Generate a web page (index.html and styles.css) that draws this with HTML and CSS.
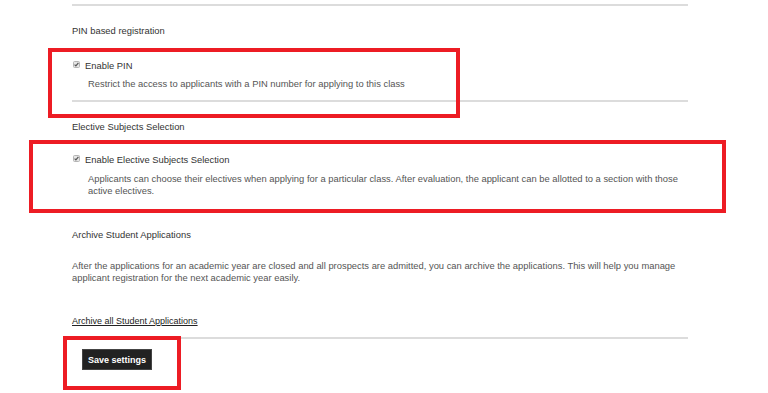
FILE: index.html
```html
<!DOCTYPE html>
<html>
<head>
<meta charset="utf-8">
<link rel="stylesheet" href="styles.css">
</head>
<body>
<div class="page">
  <div class="settings">
    <hr class="rule rule-top">
    <h3 class="heading h-pin">PIN based registration</h3>
    <div class="option opt-pin">
      <label class="check-row">
        <span class="check"><svg width="7" height="7" viewBox="0 0 7 7"><rect x="0.5" y="0.5" width="6" height="6" rx="1" fill="#e6e6e6" stroke="#b5b5b5"/><path d="M1.6 3.6 L2.9 4.9 L5.4 1.8" fill="none" stroke="#555" stroke-width="1.2"/></svg></span>
        <span class="check-label">Enable PIN</span>
      </label>
      <p class="desc">Restrict the access to applicants with a PIN number for applying to this class</p>
    </div>
    <hr class="rule rule-mid">
    <h3 class="heading h-elective">Elective Subjects Selection</h3>
    <div class="option opt-elective">
      <label class="check-row">
        <span class="check"><svg width="7" height="7" viewBox="0 0 7 7"><rect x="0.5" y="0.5" width="6" height="6" rx="1" fill="#e6e6e6" stroke="#b5b5b5"/><path d="M1.6 3.6 L2.9 4.9 L5.4 1.8" fill="none" stroke="#555" stroke-width="1.2"/></svg></span>
        <span class="check-label">Enable Elective Subjects Selection</span>
      </label>
      <p class="desc desc-wide">Applicants can choose their electives when applying for a particular class. After evaluation, the applicant can be allotted to a section with those active electives.</p>
    </div>
    <h3 class="heading h-archive">Archive Student Applications</h3>
    <p class="para">After the applications for an academic year are closed and all prospects are admitted, you can archive the applications. This will help you manage applicant registration for the next academic year easily.</p>
    <a class="archive-link" href="#">Archive all Student Applications</a>
    <hr class="rule rule-bottom">
    <div class="actions">
      <button class="save-btn" type="button">Save settings</button>
    </div>
  </div>
  <div class="mark mark-pin"></div>
  <div class="mark mark-elective"></div>
  <div class="mark mark-save"></div>
</div>
</body>
</html>
```
FILE: styles.css
```css
html, body {
  margin: 0;
  padding: 0;
  background: #ffffff;
}
body {
  font-family: "Liberation Sans", Arial, sans-serif;
  font-size: 9.4px;
  color: #444;
  width: 768px;
  height: 393px;
  overflow: hidden;
}
.page {
  position: relative;
  width: 768px;
  height: 393px;
}
.settings {
  margin-left: 72px;
  width: 616px;
  padding-top: 4px;
}
.rule {
  border: 0;
  border-top: 2px solid #dcdcdc;
  margin: 0;
  height: 0;
}
.heading {
  margin: 0;
  font-size: 9.4px;
  font-weight: normal;
  color: #333;
  line-height: 12px;
}
.h-pin { margin-top: 19px; }
.opt-pin { margin-top: 23px; }
.check-row {
  display: flex;
  align-items: center;
  line-height: 12px;
}
.check {
  display: flex;
  width: 7px;
  height: 7px;
  margin-left: 1px;
  margin-right: 5px;
  margin-top: -3px;
}
.check-label {
  color: #333;
}
.desc {
  margin: 6px 0 0 16px;
  line-height: 12px;
  color: #555;
  width: 594px;
}
.rule-mid { margin-top: 10px; }
.h-elective { margin-top: 19px; }
.opt-elective { margin-top: 21px; }
.opt-elective .desc { margin-top: 7px; }
.h-archive { margin-top: 32px; }
.para {
  margin: 19px 0 0 0;
  line-height: 12px;
  color: #555;
  width: 616px;
}
.archive-link {
  display: block;
  margin-top: 31px;
  line-height: 12px;
  font-size: 9px;
  color: #222;
  text-decoration: underline;
  width: max-content;
}
.rule-bottom { margin-top: 10px; }
.actions {
  padding: 10px 0 0 10px;
}
.save-btn {
  font-family: "Liberation Sans", Arial, sans-serif;
  font-size: 9px;
  font-weight: bold;
  color: #fff;
  background: #222;
  border: 1px solid #444;
  padding: 0 5px;
  height: 21px;
  cursor: pointer;
}
.mark {
  position: absolute;
  border: 4px solid #ed1c24;
  box-sizing: border-box;
}
.mark-pin { left: 48px; top: 48px; width: 412px; height: 70px; }
.mark-elective { left: 29px; top: 140px; width: 697px; height: 73px; }
.mark-save { left: 63px; top: 336px; width: 118px; height: 54px; }
```
